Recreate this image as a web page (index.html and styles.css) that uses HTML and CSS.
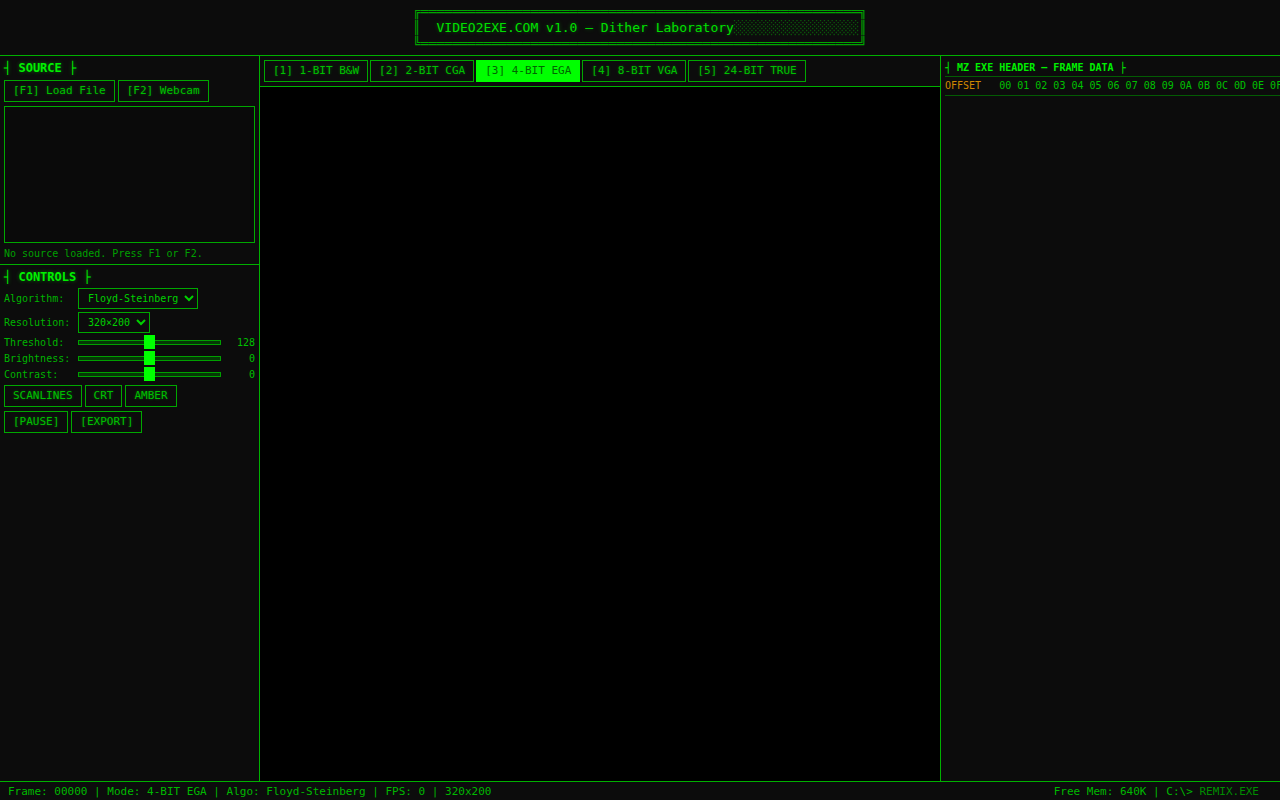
FILE: index.html
```html
<!DOCTYPE html>
<html lang="en">
<head>
  <meta charset="UTF-8">
  <title>VIDEO2EXE.COM - Dither Laboratory</title>
  <link rel="stylesheet" href="styles.css">
</head>
<body>
  <div id="app">
    <header class="top">
<pre class="banner">╔════════════════════════════════════════════════════════╗
║  <span class="title">VIDEO2EXE.COM v1.0 — Dither Laboratory</span><span class="shade">░░░░░░░░░░░░░░░░</span>║
╚════════════════════════════════════════════════════════╝</pre>
    </header>

    <main class="workspace">
      <aside class="left">
        <section class="panel source">
          <h3 class="sec-title">┤ SOURCE ├</h3>
          <div class="btn-row">
            <button class="btn">[F1] Load File</button>
            <button class="btn">[F2] Webcam</button>
          </div>
          <div class="preview"></div>
          <p class="hint">No source loaded. Press F1 or F2.</p>
        </section>

        <section class="panel controls">
          <h3 class="sec-title">┤ CONTROLS ├</h3>
          <div class="ctl-row">
            <label>Algorithm:</label>
            <select class="sel sel-algo">
              <option>Floyd-Steinberg</option>
            </select>
          </div>
          <div class="ctl-row">
            <label>Resolution:</label>
            <select class="sel sel-res">
              <option>320×200</option>
            </select>
          </div>
          <div class="slide-row">
            <label>Threshold:</label>
            <input type="range" min="0" max="255" value="128">
            <span class="val">128</span>
          </div>
          <div class="slide-row">
            <label>Brightness:</label>
            <input type="range" min="-100" max="100" value="0">
            <span class="val">0</span>
          </div>
          <div class="slide-row">
            <label>Contrast:</label>
            <input type="range" min="-100" max="100" value="0">
            <span class="val">0</span>
          </div>
          <div class="btn-row fx">
            <button class="btn">SCANLINES</button>
            <button class="btn">CRT</button>
            <button class="btn">AMBER</button>
          </div>
          <div class="btn-row">
            <button class="btn">[PAUSE]</button>
            <button class="btn">[EXPORT]</button>
          </div>
        </section>
      </aside>

      <section class="center">
        <nav class="tabs">
          <button class="btn tab">[1] 1-BIT B&amp;W</button>
          <button class="btn tab">[2] 2-BIT CGA</button>
          <button class="btn tab active">[3] 4-BIT EGA</button>
          <button class="btn tab">[4] 8-BIT VGA</button>
          <button class="btn tab">[5] 24-BIT TRUE</button>
        </nav>
        <div class="screen"></div>
      </section>

      <aside class="right">
        <h4 class="hex-title">┤ MZ EXE HEADER — FRAME DATA ├</h4>
        <div class="hex-head"><span class="off">OFFSET</span>   00 01 02 03 04 05 06 07 08 09 0A 0B 0C 0D 0E 0F</div>
      </aside>
    </main>

    <footer class="status">
      <span>Frame: 00000 | Mode: 4-BIT EGA | Algo: Floyd-Steinberg | FPS: 0 | 320x200</span>
      <span>Free Mem: 640K | C:\&gt; <span class="prompt">REMIX.EXE</span></span>
    </footer>
  </div>
</body>
</html>
```

FILE: styles.css
```css
* { box-sizing: border-box; }

body {
  margin: 0;
  background: #0c0c0c;
  color: #00c800;
  font-family: "DejaVu Sans Mono", "Liberation Mono", monospace;
  font-size: 11px;
  overflow: hidden;
}

#app {
  height: 800px;
  display: grid;
  grid-template-rows: 56px 1fr 19px;
}

/* header */
.top {
  border-bottom: 1px solid #00b000;
  display: flex;
  justify-content: center;
  align-items: center;
}

.banner {
  margin: 0;
  font-family: inherit;
  font-size: 13px;
  line-height: 16px;
  color: #00a800;
}

.banner .title {
  color: #00e000;
  text-shadow: 0 0 4px rgba(0, 255, 0, 0.35);
}

.banner .shade {
  color: #0b6a0b;
}

/* layout */
.workspace {
  display: grid;
  grid-template-columns: 260px 1fr 340px;
  min-height: 0;
}

.left {
  border-right: 1px solid #00b000;
}

.panel {
  padding: 4px;
}

.source {
  border-bottom: 1px solid #00b000;
}

.sec-title {
  margin: 0 0 4px;
  font-size: 12px;
  line-height: 16px;
  font-weight: bold;
  color: #00f000;
  text-shadow: 0 0 4px rgba(0, 255, 0, 0.4);
}

.btn-row {
  display: flex;
  gap: 3px;
}

.btn {
  font-family: inherit;
  font-size: 11px;
  line-height: 14px;
  padding: 3px 8px;
  background: #0c0c0c;
  color: #00c000;
  border: 1px solid #00a800;
  border-radius: 0;
  text-shadow: 0 0 3px rgba(0, 255, 0, 0.3);
  cursor: pointer;
}

.preview {
  margin-top: 4px;
  height: 137px;
  border: 1px solid #00a800;
  background: #0a0a0a;
}

.hint {
  margin: 5px 0 0;
  font-size: 10px;
  line-height: 12px;
  color: #00a000;
}

.controls .sec-title {
  margin-bottom: 3px;
}

.ctl-row {
  display: flex;
  align-items: center;
  margin-bottom: 3px;
}

.ctl-row + .ctl-row {
  margin-bottom: 1px;
}

.ctl-row label,
.slide-row label {
  width: 74px;
  font-size: 10px;
  color: #00b400;
}

.sel {
  font-family: inherit;
  font-size: 10px;
  height: 21px;
  padding: 0 2px 0 5px;
  background: #0c0c0c;
  color: #00d000;
  border: 1px solid #00a800;
  border-radius: 0;
  outline: none;
}

.sel-algo { width: 120px; }
.sel-res { width: 72px; }

.slide-row {
  display: flex;
  align-items: center;
  height: 16px;
}

.slide-row input {
  -webkit-appearance: none;
  appearance: none;
  width: 143px;
  height: 5px;
  margin: 0;
  background: #063806;
  border: 1px solid #00a000;
}

.slide-row input::-webkit-slider-thumb {
  -webkit-appearance: none;
  width: 11px;
  height: 14px;
  background: #00ff00;
  border: none;
  border-radius: 0;
}

.val {
  flex: 1;
  text-align: right;
  font-size: 10px;
  color: #00c000;
}

.fx {
  margin-top: 3px;
  margin-bottom: 4px;
}

/* center */
.center {
  display: flex;
  flex-direction: column;
  min-width: 0;
}

.tabs {
  display: flex;
  gap: 2px;
  padding: 4px;
  border-bottom: 1px solid #00b000;
}

.tab.active {
  background: #00ff00;
  color: #006400;
  border-color: #00ff00;
  text-shadow: none;
}

.screen {
  flex: 1;
  background: #000;
}

/* right */
.right {
  border-left: 1px solid #00b000;
  padding: 4px 0 0 4px;
  overflow: hidden;
  font-size: 10px;
}

.hex-title {
  margin: 0;
  font-size: 10px;
  line-height: 15px;
  font-weight: bold;
  color: #00f000;
  padding-bottom: 1px;
  border-bottom: 1px solid #035c03;
  white-space: nowrap;
}

.hex-head {
  white-space: pre;
  line-height: 18px;
  color: #00c000;
  border-bottom: 1px solid #035c03;
}

.off {
  color: #d08800;
}

/* status */
.status {
  border-top: 1px solid #00b000;
  display: flex;
  justify-content: space-between;
  align-items: center;
  padding: 0 21px 0 8px;
  color: #00b800;
  background: #0c0c0c;
}

.prompt {
  color: #008c00;
}
```
